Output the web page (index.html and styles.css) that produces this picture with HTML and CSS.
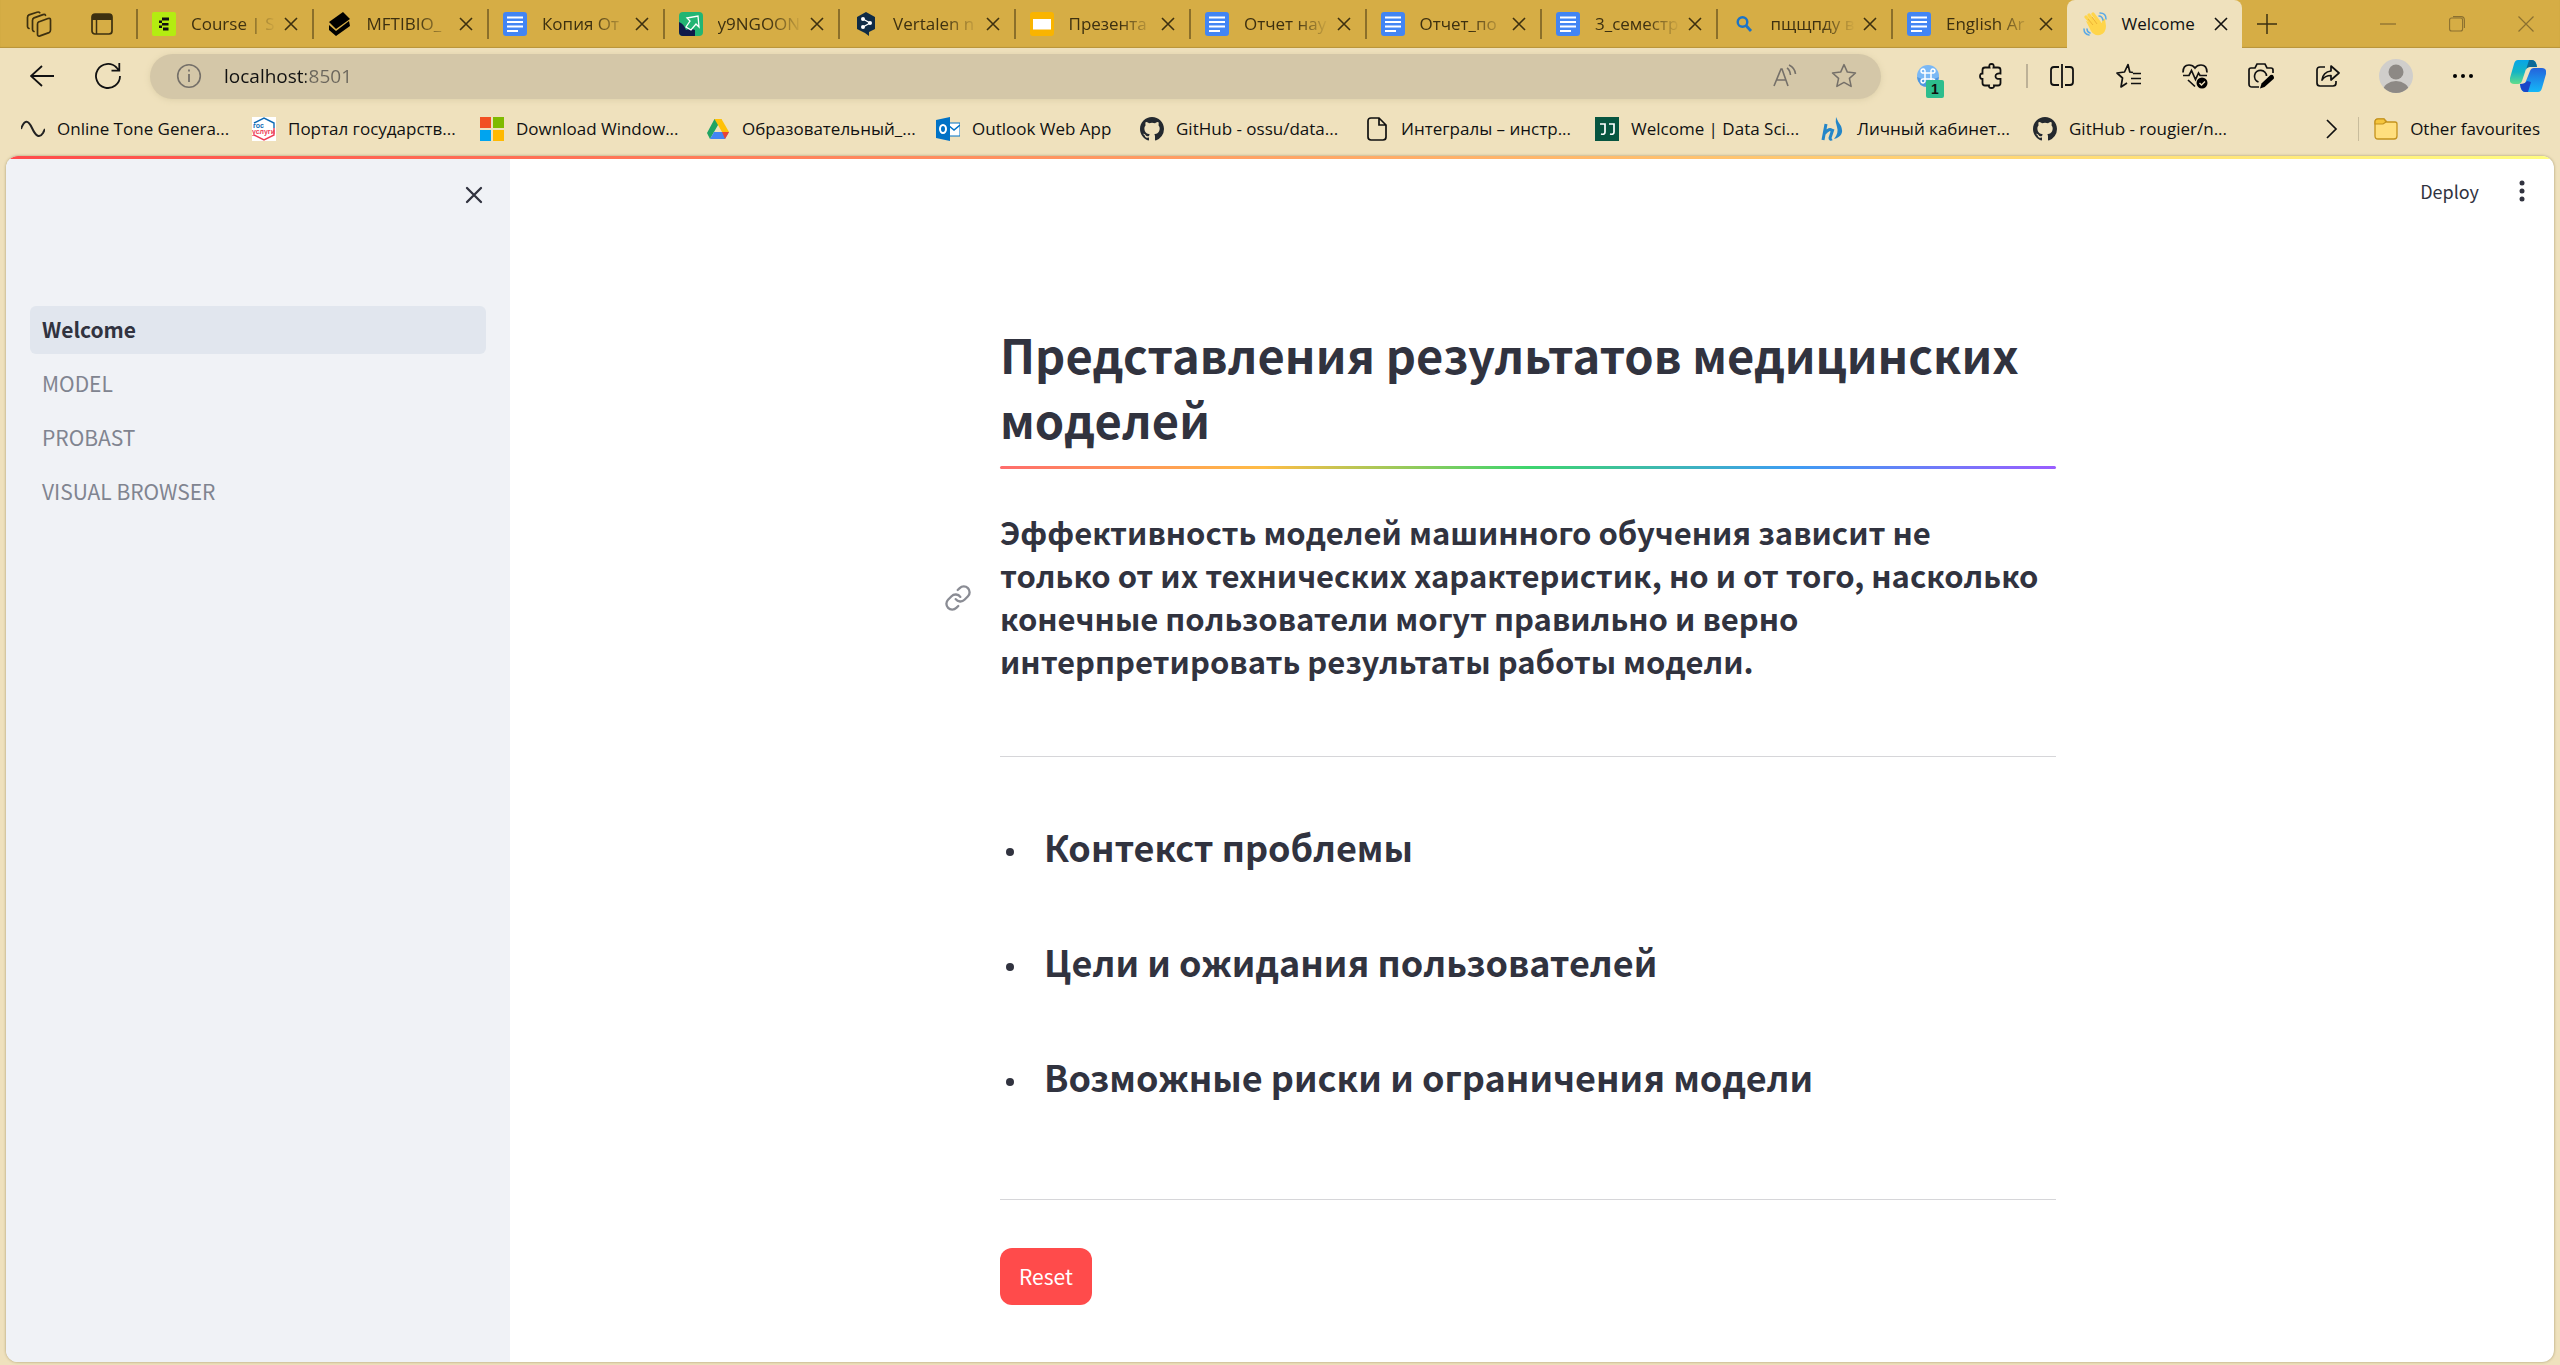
FILE: index.html
```html
<!DOCTYPE html>
<html lang="ru">
<head>
<meta charset="utf-8">
<meta name="viewport" content="width=device-width, initial-scale=1">
<title>Welcome</title>
<link rel="stylesheet" href="styles.css">
</head>
<body>
<svg class="defs" aria-hidden="true">
  <symbol id="x" viewBox="0 0 14 14"><path d="M1 1l12 12M13 1L1 13" fill="none" stroke="currentColor" stroke-width="1.6"/></symbol>
  <symbol id="doc" viewBox="0 0 24 24"><rect width="24" height="24" rx="3" fill="#4285f4"/><path d="M4 5.5h16M4 10h16M4 14.5h16M4 19h11" stroke="#fff" stroke-width="2.2"/></symbol>
  <symbol id="github" viewBox="0 0 16 16"><path fill="#24292f" d="M8 0C3.58 0 0 3.58 0 8c0 3.54 2.29 6.53 5.47 7.59.4.07.55-.17.55-.38 0-.19-.01-.82-.01-1.49-2.01.37-2.53-.49-2.69-.94-.09-.23-.48-.94-.82-1.13-.28-.15-.68-.52-.01-.53.63-.01 1.08.58 1.23.82.72 1.21 1.87.87 2.33.66.07-.52.28-.87.51-1.07-1.78-.2-3.64-.89-3.64-3.95 0-.87.31-1.59.82-2.15-.08-.2-.36-1.02.08-2.12 0 0 .67-.21 2.2.82a7.6 7.6 0 0 1 4 0c1.53-1.04 2.2-.82 2.2-.82.44 1.1.16 1.92.08 2.12.51.56.82 1.27.82 2.15 0 3.07-1.87 3.75-3.65 3.95.29.25.54.73.54 1.48 0 1.07-.01 1.93-.01 2.2 0 .21.15.46.55.38A8 8 0 0 0 16 8c0-4.42-3.58-8-8-8z"/></symbol>
</svg>

<header class="tabbar">
  <div class="tab-tools">
    <button type="button" aria-label="Workspaces"><svg width="26" height="26" viewBox="0 0 26 26"><g fill="none" stroke="currentColor" stroke-width="1.7" stroke-linejoin="round" stroke-linecap="round"><path d="M12.500 11l9.500-3.500q2.500-.8 2.500 1.500v10q0 2-1.500 2.600l-9 3.300q-2.500.8-2.500-1.600v-10q0-1.700 1-2.300z"/><path d="M8 20.500q-1.500-.5-1.500-2V9.500q0-2 1.500-2.600l9-3.300q2-.6 2.500.7"/><path d="M3 17.500q-1.500-.5-1.500-2V6.500q0-2 1.500-2.600l8-2.700q2-.6 2.700.5"/></g></svg></button>
    <button type="button" aria-label="Tab actions"><svg width="22" height="22" viewBox="0 0 22 22"><rect x="1" y="1" width="20" height="20" rx="3" fill="none" stroke="currentColor" stroke-width="1.7"/><path d="M1 7V4q0-3 3-3h14q3 0 3 3v3z" fill="currentColor"/><path d="M5.500 7v14" stroke="currentColor" stroke-width="1.500"/></svg></button>
  </div>
  <nav class="tabs" aria-label="Tabs">
    <div class="tab"><svg class="fav" viewBox="0 0 24 24"><rect width="24" height="24" rx="2" fill="#b4ec11"/><path d="M10 5.500h7v3h-7zM7 8.500h3v2.500H7zM10 11h6.500v2.500H10zM7 13.500h3V16H7zM11 15.500h5.500v3H11z" fill="#111"/></svg><span>Course | S</span><button type="button" aria-label="Close tab"><svg><use href="#x"/></svg></button></div>
    <div class="tab"><svg class="fav" viewBox="0 0 24 24"><path d="M1 10L15 0l7 7L8 17z"/><path d="M1 13l7 6 13-10 1 5L8 24l-7-6z"/></svg><span>MFTIBIO_</span><button type="button" aria-label="Close tab"><svg><use href="#x"/></svg></button></div>
    <div class="tab"><svg class="fav"><use href="#doc"/></svg><span>Копия От</span><button type="button" aria-label="Close tab"><svg><use href="#x"/></svg></button></div>
    <div class="tab"><svg class="fav" viewBox="0 0 24 24"><rect width="24" height="24" rx="4" fill="#22b573"/><path d="M0 10q5 2 7 8 4-2 9 0v6H4q-4 0-4-4z" fill="#101a4a"/><path d="M8 6l11-2 1 11-3-3-5 6-5-3 4-6z" fill="#22b573" stroke="#fff" stroke-width="1.300"/></svg><span>y9NGOON</span><button type="button" aria-label="Close tab"><svg><use href="#x"/></svg></button></div>
    <div class="tab"><svg class="fav" viewBox="0 0 24 24"><path d="M12 0l9 5v12l-6 3v4l-4-3-8-4V5z" fill="#0f2b46"/><path d="M9 7l7 4-7 4" fill="none" stroke="#fff" stroke-width="1.300"/><g fill="#fff"><circle cx="9" cy="7" r="2"/><circle cx="16" cy="11" r="2"/><circle cx="9" cy="15" r="2"/></g></svg><span>Vertalen n</span><button type="button" aria-label="Close tab"><svg><use href="#x"/></svg></button></div>
    <div class="tab"><svg class="fav" viewBox="0 0 24 24"><rect width="24" height="24" rx="3" fill="#f9b400"/><path d="M3 7h18v10.500H3z" fill="#fff"/></svg><span>Презента</span><button type="button" aria-label="Close tab"><svg><use href="#x"/></svg></button></div>
    <div class="tab"><svg class="fav"><use href="#doc"/></svg><span>Отчет нау</span><button type="button" aria-label="Close tab"><svg><use href="#x"/></svg></button></div>
    <div class="tab"><svg class="fav"><use href="#doc"/></svg><span>Отчет_по</span><button type="button" aria-label="Close tab"><svg><use href="#x"/></svg></button></div>
    <div class="tab"><svg class="fav"><use href="#doc"/></svg><span>3_семестр</span><button type="button" aria-label="Close tab"><svg><use href="#x"/></svg></button></div>
    <div class="tab"><svg class="fav" viewBox="0 0 24 24"><circle cx="10.500" cy="10" r="4.800" fill="none" stroke="#1a73c8" stroke-width="2.400"/><path d="M14 13.500l5 5.500" stroke="#1a73c8" stroke-width="2.800"/></svg><span>пщщпду в</span><button type="button" aria-label="Close tab"><svg><use href="#x"/></svg></button></div>
    <div class="tab"><svg class="fav"><use href="#doc"/></svg><span>English Ar</span><button type="button" aria-label="Close tab"><svg><use href="#x"/></svg></button></div>
    <div class="tab active"><svg class="fav" viewBox="0 0 24 24"><path d="M3 5l7 8M6 3l7 9M10 2l6 8" stroke="#ffd54a" stroke-width="3.200" stroke-linecap="round"/><path d="M3 9l5 10q3 5 9 4 6-2 6-9l-1-7q-3-1-3 4L13 7 6 10z" fill="#ffd54a"/><path d="M5 7l5 6M9 5l5 7" stroke="#e8a92f" stroke-width=".8"/><path d="M16 4q3 0 4 4M17 1q6 0 6 6M1 17q0 5 5 6M4 17q0 3 3 4" fill="none" stroke="#5aa9e6" stroke-width="1.500" stroke-linecap="round"/></svg><span>Welcome</span><button type="button" aria-label="Close tab"><svg><use href="#x"/></svg></button></div>
  </nav>
  <button type="button" class="new-tab" aria-label="New tab"><svg width="22" height="22" viewBox="0 0 22 22"><path d="M11 1v20M1 11h20" stroke="currentColor" stroke-width="1.500"/></svg></button>
  <div class="window-controls">
    <button type="button" aria-label="Minimise"><svg width="16" height="16" viewBox="0 0 16 16"><path d="M0 8h16" stroke="currentColor" stroke-width="1.300"/></svg></button>
    <button type="button" aria-label="Restore"><svg width="16" height="16" viewBox="0 0 16 16" fill="none" stroke="currentColor" stroke-width="1.100"><rect x=".6" y="2" width="13" height="13" rx="2"/><path d="M4 .6h8q3.400 0 3.400 3.400v8"/></svg></button>
    <button type="button" aria-label="Close"><svg width="16" height="16" viewBox="0 0 16 16"><path d="M.5.5l15 15M15.500.5l-15 15" stroke="currentColor" stroke-width="1.200"/></svg></button>
  </div>
</header>

<div class="toolbar">
  <button type="button" class="nav-button" aria-label="Back"><svg width="24" height="22" viewBox="0 0 24 22"><path d="M24 11H1M12 1L1 11l11 10" fill="none" stroke="currentColor" stroke-width="1.800"/></svg></button>
  <button type="button" class="nav-button" aria-label="Refresh"><svg width="26" height="26" viewBox="0 0 26 26"><path d="M25 13a12 12 0 1 1-3.500-8.500L24 7.500M24.300 0v7.700H16.500" fill="none" stroke="currentColor" stroke-width="1.800"/></svg></button>
  <div class="address">
    <svg width="26" height="26" viewBox="0 0 26 26"><circle cx="13" cy="13" r="11.300" fill="none" stroke="currentColor" stroke-width="1.600"/><path d="M13 11v8M13 6.500v2" stroke="currentColor" stroke-width="1.800"/></svg>
    <input type="text" value="localhost:8501" aria-label="Address">
    <button type="button" aria-label="Read aloud"><svg width="24" height="24" viewBox="0 0 24 24"><path d="M1 22L8 5h1l6 17M3.500 16h9M14 4q3 2 3.500 7M16 1q6 3 6.500 9" fill="none" stroke="currentColor" stroke-width="1.600"/></svg></button>
    <button type="button" aria-label="Add to favourites"><svg width="26" height="26" viewBox="0 0 24 24"><path d="M12 1.500l3.100 6.900 7.500.8-5.600 5 1.600 7.400L12 17.900l-6.600 3.700L7 14.200l-5.600-5 7.500-.8z" fill="none" stroke="currentColor" stroke-width="1.400" stroke-linejoin="round"/></svg></button>
  </div>
  <div class="actions">
    <button type="button" class="extension" aria-label="Extension"><svg width="24" height="24" viewBox="0 0 24 24"><circle cx="12" cy="12" r="11" fill="#7ab8f5"/><path d="M1 13q11 6 22 0-1 10-11 10T1 13z" fill="#4f97e0"/><path d="M9 9h6v6H9zM9 9H7.500A2 2 0 1 1 9 7.500zM15 9V7.500A2 2 0 1 1 16.500 9zM15 15h1.500A2 2 0 1 1 15 16.500zM9 15v1.500A2 2 0 1 1 7.500 15z" fill="none" stroke="#fff" stroke-width="1.500"/></svg><span class="badge">1</span></button>
    <button type="button" class="extensions" aria-label="Extensions"><svg width="24" height="26" viewBox="0 0 24 26"><path d="M6 4.500h4.500Q9.500 1 12.500 1t2 3.500H19q2.500 0 2.500 2.500v3.500q-5-.5-5 2.700t5 2.700V20q0 2.500-2.500 2.500h-4q.5 2.500-2.500 2.500T10 22.500H6Q3.500 22.500 3.500 20v-4Q1 16 1 13.200t2.500-2.700V7q0-2.500 2.500-2.500z" fill="none" stroke="currentColor" stroke-width="1.800"/></svg></button>
    <i class="divider"></i>
    <button type="button" class="wide" aria-label="Split screen"><svg width="24" height="24" viewBox="0 0 24 24"><path d="M9 3H4Q1 3 1 6v12q0 3 3 3h5M15 3h5q3 0 3 3v12q0 3-3 3h-5M12 0v24" fill="none" stroke="currentColor" stroke-width="1.800"/></svg></button>
    <button type="button" aria-label="Favourites"><svg width="26" height="26" viewBox="0 0 26 26"><path d="M17 9.500l-3.200-.5L12 1.500 8.500 9l-7.500 1 5.500 5L5 24l6-4M17 10.500h8M15 15.500h10M15 20.500h10" fill="none" stroke="currentColor" stroke-width="1.700" stroke-linejoin="round"/></svg></button>
    <button type="button" aria-label="Browser essentials"><svg width="26" height="26" viewBox="0 0 26 26"><path d="M1 9.500Q1 2 7 2q4 0 6 3 2-3 6-3 6 0 6 7.500M1 12.500h6l2.500-5 4 9 3-6.500 1.500 2.500h7M6 17l7 6.500" fill="none" stroke="currentColor" stroke-width="1.700"/><circle cx="20" cy="20" r="5.500"/><path d="M17.500 20l2 2 3.500-3.500" fill="none" stroke="#efe1bd" stroke-width="1.400"/></svg></button>
    <button type="button" aria-label="Screenshot"><svg width="26" height="26" viewBox="0 0 26 26"><path d="M11 24H4q-3 0-3-3V7q0-2 2-2h4l2-4h8l2 4h4q2 0 2 2v3M10.500 19a6 6 0 1 1 8-6" fill="none" stroke="currentColor" stroke-width="1.700"/><path d="M12 25.500l1.500-5 9-8.500q2-1 3 1t0 3l-9 8z"/></svg></button>
    <button type="button" class="wide" aria-label="Share"><svg width="24" height="24" viewBox="0 0 24 24"><path d="M9 3H4Q1 3 1 6v13q0 3 3 3h13q3 0 3-3v-2M6 16q1-8 9-9V2l8 7-8 7v-4.500q-6 0-9 4.500z" fill="none" stroke="currentColor" stroke-width="1.700" stroke-linejoin="round"/></svg></button>
    <button type="button" class="wide" aria-label="Profile"><svg width="34" height="34" viewBox="0 0 34 34"><clipPath id="avatar"><circle cx="17" cy="17" r="17"/></clipPath><g clip-path="url(#avatar)"><path d="M0 0h34v34H0z" fill="#d0cecb"/><circle cx="17" cy="13" r="7.500" fill="#8d8985"/><ellipse cx="17" cy="32" rx="13" ry="10" fill="#8d8985"/></g></svg></button>
    <button type="button" aria-label="Settings and more"><svg width="22" height="6" viewBox="0 0 22 6"><circle cx="3" cy="3" r="2"/><circle cx="11" cy="3" r="2"/><circle cx="19" cy="3" r="2"/></svg></button>
    <button type="button" class="copilot" aria-label="Copilot"><svg width="36" height="34" viewBox="0 0 36 34"><defs><linearGradient id="c1" x2="0" y2="1"><stop stop-color="#08a5e8"/><stop offset=".5" stop-color="#14b5c4"/><stop offset="1" stop-color="#62dd8b"/></linearGradient><linearGradient id="c2" x2="0" y2="1"><stop stop-color="#2463dc"/><stop offset="1" stop-color="#14b8f8"/></linearGradient></defs><path d="M8 1h14q4 0 5 7h-7q-4 0-5 5l-3 9q-1 3-4 3H4q-5 0-4-6L4 5q1-4 4-4z" fill="url(#c1)"/><path d="M19 1h3q4 0 5 7h-7q-3 0-4 3z" fill="#0c6a98"/><path d="M28 33H15q-4 0-5-8 5 1 6-3l4-10q1-3 4-3h8q5 0 4 6l-4 14q-1 4-4 4z" fill="url(#c2)"/><path d="M18 33h-3q-4 0-5-8 5 0 7-3l4 1z" fill="#1947c9"/></svg></button>
  </div>
</div>

<nav class="bookmarks" aria-label="Favourites bar">
  <a href="#"><svg viewBox="0 0 24 24"><path d="M0 12Q5-2 11 11t11 5l2-4" fill="none" stroke="#222" stroke-width="2"/></svg>Online Tone Genera...</a>
  <a href="#"><svg viewBox="0 0 24 24"><path d="M0 0h24v24H0z" fill="#fff"/><path d="M2 6l10-5 10 5v5" fill="none" stroke="#0d6ab5" stroke-width="1.400"/><path d="M22 11v7l-10 5-10-5" fill="none" stroke="#ee3f58" stroke-width="1.400"/><text x="1" y="11" class="gos-a">гос</text><text x="0" y="17" class="gos-b">услуги</text></svg>Портал государств...</a>
  <a href="#"><svg viewBox="0 0 24 24"><path d="M0 0h11v11H0z" fill="#f25022"/><path d="M13 0h11v11H13z" fill="#7fba00"/><path d="M0 13h11v11H0z" fill="#00a4ef"/><path d="M13 13h11v11H13z" fill="#ffb900"/></svg>Download Window...</a>
  <a href="#"><svg viewBox="0 0 24 24"><path d="M8.500 2h7L8 15l-4 7-3-6z" fill="#1fa463"/><path d="M8.500 2h7L23 15h-7z" fill="#ffc107"/><path d="M8 15h15l-4 7H4z" fill="#4285f4"/><path d="M16 15h7l-4 7z" fill="#ea4335"/></svg>Образовательный_...</a>
  <a href="#"><svg viewBox="0 0 24 24"><path d="M11 6h13v13H11z" fill="#fff" stroke="#0072c6"/><path d="M12 8l6 5 6-5" fill="none" stroke="#0072c6" stroke-width="1.500"/><path d="M0 3l14-3v24L0 21z" fill="#0072c6"/><ellipse cx="7" cy="12" rx="3" ry="4" fill="none" stroke="#fff" stroke-width="2"/></svg>Outlook Web App</a>
  <a href="#"><svg><use href="#github"/></svg>GitHub - ossu/data...</a>
  <a href="#"><svg viewBox="0 0 24 24"><path d="M6 1h8l7 7v12q0 3-3 3H6q-3 0-3-3V4q0-3 3-3zM14 1v7h7" fill="none" stroke="#111" stroke-width="1.700"/></svg>Интегралы – инстр...</a>
  <a href="#"><svg viewBox="0 0 24 24"><path d="M0 0h24v24H0z" fill="#075540"/><path d="M5 7h5v8q0 3-4 2M14 7h5v8q0 3-4 2" fill="none" stroke="#fff" stroke-width="1.700"/></svg>Welcome | Data Sci...</a>
  <a href="#"><svg viewBox="0 0 24 24"><path d="M5 7L2 23M12 12l-3 9q0 2 2 1M3 17q6-7 8-3" fill="none" stroke="#2486c8" stroke-width="3"/><path d="M15 0q2 5 5 9 4 10-7 13 5-6 3-12-2-5-1-10z" fill="#2486c8"/></svg>Личный кабинет...</a>
  <a href="#"><svg><use href="#github"/></svg>GitHub - rougier/n...</a>
  <button type="button" aria-label="More favourites"><svg width="12" height="20" viewBox="0 0 12 20"><path d="M1 1l9 9-9 9" fill="none" stroke="currentColor" stroke-width="1.700"/></svg></button>
  <a class="other" href="#"><svg viewBox="0 0 24 24"><path d="M4 2h6l3 3h8q2 0 2 2v12q0 3-3 3H4q-3 0-3-3V5q0-3 3-3z" fill="#ffdf7e" stroke="#c4921c" stroke-width="1.300"/><path d="M1 7h8l3-2-2-3H4Q1 2 1 5z" fill="#f5c53c" stroke="#c4921c" stroke-width="1.200"/></svg>Other favourites</a>
</nav>

<div class="viewport">
  <aside class="sidebar">
    <button type="button" class="collapse" aria-label="Close sidebar"><svg width="18" height="18" viewBox="0 0 18 18"><path d="M2 2l14 14M16 2L2 16" stroke="currentColor" stroke-width="2.300" stroke-linecap="round"/></svg></button>
    <nav class="pages" aria-label="Pages">
      <a class="current" href="#">Welcome</a>
      <a href="#">MODEL</a>
      <a href="#">PROBAST</a>
      <a href="#">VISUAL BROWSER</a>
    </nav>
  </aside>
  <main>
    <div class="app-header">
      <button type="button">Deploy</button>
      <button type="button" aria-label="Main menu"><svg width="6" height="22" viewBox="0 0 6 22" fill="currentColor"><circle cx="3" cy="3" r="2.500"/><circle cx="3" cy="11" r="2.500"/><circle cx="3" cy="19" r="2.500"/></svg></button>
    </div>
    <article>
      <h1>Представления результатов медицинских моделей</h1>
      <div class="rainbow"></div>
      <div class="lead">
        <a href="#lead" class="anchor" aria-label="Link to this section"><svg width="28" height="28" viewBox="0 0 24 24"><path d="M10 13a5 5 0 0 0 7.540.54l3-3a5 5 0 0 0-7.070-7.070l-1.720 1.710M14 11a5 5 0 0 0-7.540-.54l-3 3a5 5 0 0 0 7.070 7.070l1.710-1.710" fill="none" stroke="currentColor" stroke-width="2" stroke-linecap="round"/></svg></a>
        <h2 id="lead">Эффективность моделей машинного обучения зависит не только от их технических характеристик, но и от того, насколько конечные пользователи могут правильно и верно интерпретировать результаты работы модели.</h2>
      </div>
      <hr>
      <ul>
        <li><h3>Контекст проблемы</h3></li>
        <li><h3>Цели и ожидания пользователей</h3></li>
        <li><h3>Возможные риски и ограничения модели</h3></li>
      </ul>
      <hr>
      <button type="button" class="reset">Reset</button>
    </article>
  </main>
</div>
</body>
</html>
```

FILE: styles.css
```css
* { box-sizing: border-box; }

body {
  margin: 0;
  min-height: 100vh;
  display: flex;
  flex-direction: column;
  background: #efe1bd;
  color: #111;
  font: 17px/24px "Open Sans", "Noto Sans", sans-serif;
}

button {
  display: flex;
  align-items: center;
  justify-content: center;
  padding: 0;
  border: 0;
  background: none;
  color: inherit;
  font: inherit;
  cursor: pointer;
}

a { color: inherit; text-decoration: none; }
svg { flex: none; display: block; }
.defs { position: absolute; width: 0; height: 0; }

/* Tab strip */
.tabbar {
  display: flex;
  height: 48px;
  background: #d6ad45;
  box-shadow: inset 0 -1px 1px #b9943a;
  color: #3d3010;
}

.tab-tools { display: flex; flex: none; gap: 39px; width: 136px; padding-left: 26px; }
.tabs { display: grid; grid-template-columns: repeat(12, minmax(0, 1fr)); flex: 0 1 2106px; }

.tab { display: flex; align-items: center; min-width: 0; padding-right: 12px; }
.tab::before { content: ""; flex: none; width: 2px; height: 30px; margin-right: 14px; background: #8b6f2a; }
.tab.active {
  background: #efe1bd;
  border-radius: 8px 8px 0 0;
  color: #111;
}
.tab.active::before { background: none; }
.fav { width: 24px; height: 24px; margin-right: 15px; }

.tab span {
  flex: 1;
  white-space: nowrap;
  -webkit-mask-image: linear-gradient(to right, #000 60%, transparent);
  mask-image: linear-gradient(to right, #000 60%, transparent);
}
.tab.active span { -webkit-mask-image: none; mask-image: none; }
.tab button { width: 18px; margin-left: 6px; }
.tab button svg { width: 14px; height: 14px; }

.new-tab { width: 50px; }
.window-controls { display: flex; margin-left: auto; color: #8b7030; }
.window-controls button { width: 69px; }

/* Address bar */
.toolbar { display: flex; align-items: center; height: 58px; padding: 0 0 2px 9px; }
.nav-button { width: 66px; height: 45px; }

.address {
  display: flex;
  align-items: center;
  flex: 1;
  height: 45px;
  margin: 0 19px 0 9px;
  padding: 0 24px 0 26px;
  border-radius: 23px;
  background: #d4c7a8;
  box-shadow: 0 1px 6px #dccfa9;
  color: #757069;
}
.address input {
  flex: 1;
  min-width: 0;
  margin: 0 0 0 22px;
  padding: 0;
  border: 0;
  background: linear-gradient(to right, #111 82px, #6b665c 82px);
  -webkit-background-clip: text;
  background-clip: text;
  color: transparent;
  font: inherit;
  font-size: 19px;
}
.address button { margin-left: 34px; }

.actions { display: flex; align-items: center; }
.actions button { width: 66px; height: 45px; }
.actions button.wide { width: 68px; }
.actions button.copilot { width: 64px; }
.actions .extension { position: relative; width: 56px; }
.actions .extensions { width: 70px; }
.divider { width: 2px; height: 24px; background: #bdb197; }
.badge {
  position: absolute;
  right: 12px;
  bottom: 1px;
  width: 18px;
  height: 18px;
  border-radius: 2px;
  background: #2dbd8d;
  font: bold 14px/18px "Liberation Sans", sans-serif;
}

/* Favourites bar */
.bookmarks {
  display: grid;
  grid-template-columns: 231px 228px 226px 230px 204px 225px 230px 226px 212px 1fr auto auto;
  align-items: center;
  height: 46px;
  padding: 0 20px 0 21px;
}
.bookmarks a { display: flex; align-items: center; gap: 12px; white-space: nowrap; }
.bookmarks a svg { width: 24px; height: 24px; }
.bookmarks button { width: 52px; }
.bookmarks .other { padding-left: 15px; border-left: 1px solid #c8bc9c; }
.gos-a, .gos-b { font: bold 7px "Liberation Sans", sans-serif; fill: #0d6ab5; }
.gos-b { fill: #ee3f58; }

/* Page */
.viewport {
  position: relative;
  display: flex;
  flex: 1;
  margin: 4px 6px 3px;
  overflow: hidden;
  border-radius: 12px;
  background: #fff;
  box-shadow: 0 0 3px #a89a70;
  color: #31333f;
  font-family: "Noto Sans CJK SC", "Noto Sans", sans-serif;
  font-size: 21px;
}
.viewport::before {
  content: "";
  position: absolute;
  inset: 0 0 auto;
  height: 3px;
  background: linear-gradient(to right, #ff4b4b, #fffd80);
}

.sidebar { flex: 0 0 504px; padding: 27px 24px; background: #f0f2f6; }
.collapse { width: 24px; height: 24px; margin-left: auto; }
.pages { display: grid; gap: 6px; margin-top: 99px; }
.pages a { padding: 7px 12px 9px; border-radius: 6px; color: #808490; line-height: 32px; }
.pages a.current { background: #e1e6ee; color: #31333f; font-weight: 600; }

main { flex: 1; min-width: 0; padding-right: 8px; }
.app-header { display: flex; justify-content: flex-end; align-items: center; gap: 40px; padding: 23px 21px 0 0; font-size: 18px; }

article { max-width: 1056px; margin: 0 auto; padding: 118px 0 48px; }
h1, h2, h3 { margin: 0; font-weight: 600; }
h1 { font-size: 47px; line-height: 65px; }
.rainbow {
  height: 3px;
  margin: 15px 0 41px;
  border-radius: 2px;
  background: linear-gradient(to right, #ff6c6c, #ffbd45, #3dd56d, #3d9df3, #9a5dff);
}
.lead { position: relative; }
.anchor { position: absolute; right: 100%; top: 74px; margin-right: 28px; color: #8a8c94; }
h2 { padding-right: 12px; font-size: 31px; line-height: 43px; }
hr { height: 1px; margin: 74px 0 64px; border: 0; background: #d6d6d9; }

ul { display: grid; gap: 65px; margin: 0; padding: 0; list-style: none; }
li { display: flex; align-items: center; gap: 30px; padding-left: 6px; }
li::before { content: ""; width: 8px; height: 8px; margin-top: 12px; border-radius: 50%; background: #31333f; }
h3 { font-size: 36px; line-height: 50px; }
ul + hr { margin: 98px 0 48px; }

.reset { height: 57px; padding: 0 19px 2px; border-radius: 12px; background: #ff4b4b; color: #fff; }
```
